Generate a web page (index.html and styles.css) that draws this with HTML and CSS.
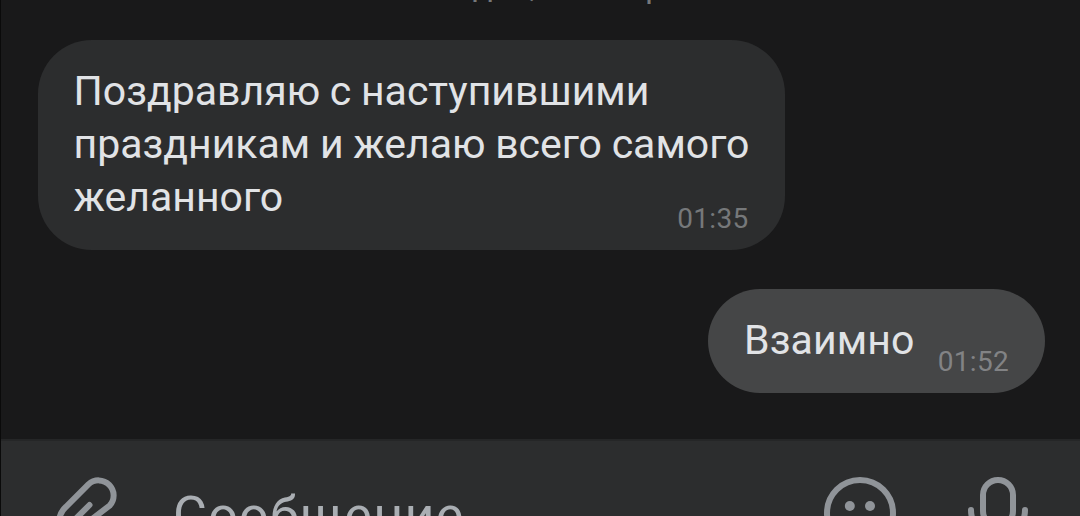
FILE: index.html
```html
<!DOCTYPE html>
<html lang="ru">
<head>
	<meta charset="utf-8">
	<title>Сообщения</title>
	<link rel="stylesheet" href="styles.css">
</head>
<body>
<main class="chat">
	<div class="date">Сегодня, 1 января</div>
	<div class="message in">
		<div class="text">Поздравляю с наступившими<br>праздникам и желаю всего самого<br>желанного</div>
		<time class="time">01:35</time>
	</div>
	<div class="message out">
		<div class="text">Взаимно</div>
		<time class="time">01:52</time>
	</div>
</main>
<footer class="composer">
	<svg class="icon attach" viewBox="0 0 84 84">
		<path d="M43.500 34 L28 49.500 a5 5 0 0 0 7 7 L63.600 34.600 A15 15 0 0 0 42.400 13.400 L20 35.800 C11 44 11 57 19 65"/>
	</svg>
	<div class="field">Сообщение</div>
	<svg class="icon smile" viewBox="0 0 84 84">
		<circle cx="42" cy="42" r="33"/>
		<circle class="dot" cx="31.800" cy="35" r="5"/>
		<circle class="dot" cx="52" cy="35" r="5"/>
		<path d="M27 52 Q42 66 57 52"/>
	</svg>
	<svg class="icon mic" viewBox="0 0 84 84">
		<rect x="27" y="9" width="30" height="46" rx="15"/>
		<path d="M15 39 a27 27 0 0 0 54 0 M42 66 V78"/>
	</svg>
</footer>
</body>
</html>
```

FILE: styles.css
```css
* { box-sizing: border-box; }
body { margin: 0; height: 516px; overflow: hidden; background: #19191a; border-left: 1px solid #0a0a0a; font-family: Roboto, "Noto Sans", sans-serif; color: #e1e3e6; }

.chat { height: 439px; display: flex; flex-direction: column; padding: 0 35px 0 36.5px; overflow: hidden; }
.date { height: 40px; flex: none; margin: -34px 0 34px; padding-left: 2px; line-height: 40px; font-size: 33px; text-align: center; color: #76787a; }

.message { display: flex; align-items: flex-end; flex: none; }
.text { font-size: 41px; line-height: 53px; word-spacing: -0.5px; white-space: nowrap; }
.time { font-size: 28px; line-height: 34px; letter-spacing: 0.3px; color: #76787a; }

.in { align-self: flex-start; width: 747px; height: 210px; padding: 25px 36px 14px; justify-content: space-between; border-radius: 54px; background: #2c2d2e; }
.in .text { align-self: flex-start; margin-right: -100px; }
.out { align-self: flex-end; width: 337px; height: 104px; margin-top: 39px; padding: 25px 36px 14px; justify-content: space-between; border-radius: 52px; background: #454647; }
.out .text { align-self: flex-start; letter-spacing: 0.1px; }
.out .time { color: #828385; }

.composer { display: flex; align-items: flex-start; height: 77px; padding: 30px 0 0 45px; overflow: hidden; border-top: 2px solid #252627; background: #2c2d2e; }
.icon { width: 84px; height: 84px; flex: none; fill: none; stroke: #909499; stroke-width: 6; stroke-linecap: round; stroke-linejoin: round; }
.icon .dot { fill: #909499; stroke: none; }
.field { width: 645px; margin-left: 43px; padding-top: 15px; font-size: 52px; line-height: 60px; letter-spacing: 1.3px; color: #aaaeb3; }
.mic { margin-left: 54px; }
```
